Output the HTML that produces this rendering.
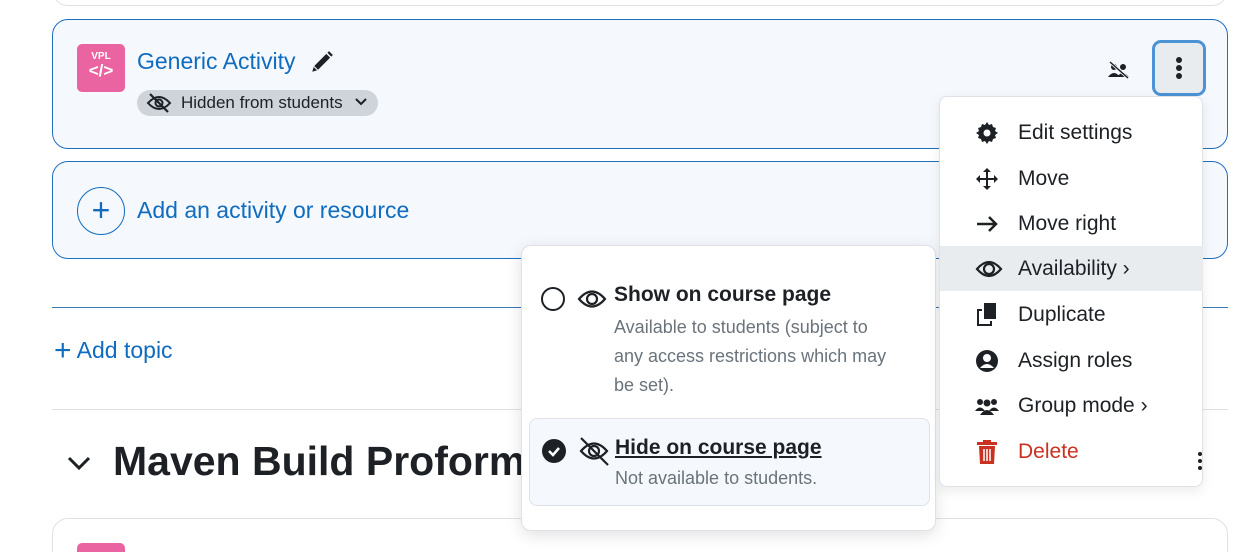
<!DOCTYPE html>
<html><head><meta charset="utf-8"><style>
*{box-sizing:border-box;margin:0;padding:0}
html,body{width:1256px;height:552px;overflow:hidden}
body{background:#fff;font-family:"Liberation Sans",sans-serif;position:relative;color:#1d2125}
.abs{position:absolute}
.card{position:absolute;left:52px;width:1176px;background:#f5f8fc;border:1px solid #1f6fc0;border-radius:16px}
.blue{color:#0f6cbf}
.mi{position:absolute;left:0;width:263px;height:45px;display:flex;align-items:center;font-size:21px}
.mi svg{position:absolute;left:35px}
.mi span{position:absolute;left:78px}
</style></head><body>
<div class="card" style="top:-40px;height:46px;border-color:#dee2e6;background:#fff"></div>
<div class="card" style="top:19px;height:130px"></div>
<div class="abs" style="left:77px;top:44px;width:48px;height:48px;background:#e964a0;border-radius:5px;color:#fff;text-align:center;font-weight:bold">
<div style="font-size:10px;margin-top:7px">VPL</div><div style="font-size:17px;line-height:18px">&lt;/&gt;</div></div>
<div class="abs blue" style="left:137px;top:48px;font-size:23px">Generic Activity</div>
<svg class="abs" style="left:309px;top:49px" width="26" height="26" viewBox="0 0 24 24"><path d="M3 21l1.5-5L16 4.5l3.5 3.5L8 19.5z M17 3.5l1.5-1.5 3.5 3.5-1.5 1.5z" fill="#1d2125"/><path d="M4.5 16l3.5 3.5" stroke="#fff" stroke-width="1"/></svg>
<div class="abs" style="left:137px;top:90px;width:241px;height:26px;background:#ced4da;border-radius:13px;font-size:17px;line-height:26px;padding-left:44px;color:#1d2125">Hidden from students</div>
<svg class="abs" style="left:354px;top:97px" width="14" height="10" viewBox="0 0 14 10"><path d="M2 2l5 5 5-5" fill="none" stroke="#1d2125" stroke-width="2"/></svg>
<svg class="abs" style="left:146px;top:93px" width="26" height="20" viewBox="0 0 26 20"><path d="M2 10Q13-2 24 10Q13 22 2 10z" fill="none" stroke="#1d2125" stroke-width="2"/><circle cx="13" cy="10" r="3.5" fill="none" stroke="#1d2125" stroke-width="2"/><path d="M4 1l18 18" stroke="#1d2125" stroke-width="2.2"/></svg>
<svg class="abs" style="left:1108px;top:59px" width="22" height="22" viewBox="0 0 22 22"><circle cx="6" cy="8" r="3" fill="#1d2125"/><circle cx="15" cy="8" r="3" fill="#1d2125"/><path d="M0 18q6-8 12 0zM9 18q6-8 12 0z" fill="#1d2125"/><path d="M2 3l18 16" stroke="#f5f8fc" stroke-width="3"/><path d="M2 3l18 16" stroke="#1d2125" stroke-width="1.5"/></svg>
<div class="abs" style="left:1152px;top:40px;width:54px;height:56px;border:3px solid #4b93d5;border-radius:9px;background:#e9ecef"></div>
<div class="abs" style="left:1176px;top:57px;width:6px;height:6px;border-radius:3px;background:#1d2125;box-shadow:0 8px 0 #1d2125,0 16px 0 #1d2125"></div>

<div class="card" style="top:161px;height:98px"></div>
<div class="abs" style="left:77px;top:187px;width:48px;height:48px;border:1.5px solid #0f6cbf;border-radius:50%;color:#0f6cbf;font-size:32px;line-height:44px;text-align:center">+</div>
<div class="abs blue" style="left:137px;top:197px;font-size:23px">Add an activity or resource</div>
<div class="abs" style="left:52px;top:307px;width:1176px;height:1px;background:#3a78b5"></div>
<div class="abs blue" style="left:54px;top:332px;font-size:23px"><span style="font-size:30px;position:relative;top:2px">+</span> Add topic</div>
<div class="abs" style="left:52px;top:409px;width:1176px;height:1px;background:#dee2e6"></div>
<svg class="abs" style="left:67px;top:455px" width="24" height="16" viewBox="0 0 24 16"><path d="M2 3l10 10L22 3" fill="none" stroke="#1d2125" stroke-width="3"/></svg>
<div class="abs" style="left:113px;top:438px;font-size:41px;font-weight:bold;white-space:nowrap">Maven Build Proforma</div>
<div class="abs" style="left:52px;top:518px;width:1176px;height:60px;border:1px solid #dee2e6;border-radius:16px;background:#fff"></div>
<div class="abs" style="left:77px;top:543px;width:48px;height:30px;background:#e964a0;border-radius:5px"></div>

<div class="abs" style="left:521px;top:245px;width:415px;height:286px;background:#fff;border:1px solid #dee2e6;border-radius:10px;box-shadow:0 4px 16px rgba(0,0,0,.12)">
<div class="abs" style="left:19px;top:41px;width:24px;height:24px;border:2px solid #1d2125;border-radius:50%"></div>
<svg class="abs" style="left:55px;top:41px" width="30" height="24" viewBox="0 0 30 24"><path d="M2 12Q15-3 28 12Q15 27 2 12z" fill="none" stroke="#1d2125" stroke-width="2.2"/><circle cx="15" cy="12" r="5" fill="none" stroke="#1d2125" stroke-width="2.2"/></svg>
<div class="abs" style="left:92px;top:37px;font-size:21px;font-weight:bold">Show on course page</div>
<div class="abs" style="left:92px;top:67px;font-size:18px;line-height:29px;color:#6a737b;width:284px">Available to students (subject to any access restrictions which may be set).</div>
<div class="abs" style="left:7px;top:172px;width:401px;height:88px;background:#f5f8fc;border:1px solid #dee2e6;border-radius:8px"></div>
<div class="abs" style="left:20px;top:193px;width:24px;height:24px;border-radius:50%;background:#1d2125"></div>
<svg class="abs" style="left:20px;top:193px" width="24" height="24"><path d="M7 12l4 4 6-7" fill="none" stroke="#fff" stroke-width="2.5"/></svg>
<svg class="abs" style="left:56px;top:190px" width="32" height="30" viewBox="0 0 32 30"><path d="M3 15Q16 0 29 15Q16 30 3 15z" fill="none" stroke="#1d2125" stroke-width="2.2"/><circle cx="16" cy="15" r="5" fill="none" stroke="#1d2125" stroke-width="2.2"/><path d="M3 2l27 27" stroke="#1d2125" stroke-width="2.2"/></svg>
<div class="abs" style="left:93px;top:190px;font-size:21px;font-weight:bold;text-decoration:underline">Hide on course page</div>
<div class="abs" style="left:93px;top:222px;font-size:18px;color:#6a737b">Not available to students.</div>
</div>

<div class="abs" style="left:939px;top:96px;width:264px;height:391px;background:#fff;border:1px solid #dee2e6;border-radius:8px;box-shadow:0 4px 12px rgba(0,0,0,.08)">
<div class="mi" style="top:13px"><svg width="24" height="24" viewBox="0 0 24 24"><path d="M12 1l2 3 3-1 1 3 3 1-1 3 3 2-3 2 1 3-3 1-1 3-3-1-2 3-2-3-3 1-1-3-3-1 1-3-3-2 3-2-1-3 3-1 1-3 3 1z" fill="#1d2125"/><circle cx="12" cy="12" r="3.5" fill="#fff"/></svg><span>Edit settings</span></div>
<div class="mi" style="top:59px"><svg width="24" height="24" viewBox="0 0 24 24"><path d="M12 1l4 4h-3v6h6V8l4 4-4 4v-3h-6v6h3l-4 4-4-4h3v-6H5v3l-4-4 4-4v3h6V5H8z" fill="#1d2125"/></svg><span>Move</span></div>
<div class="mi" style="top:104px"><svg width="24" height="24" viewBox="0 0 24 24"><path d="M2 12h19M14 5l7 7-7 7" fill="none" stroke="#1d2125" stroke-width="2.5"/></svg><span>Move right</span></div>
<div class="mi" style="top:149px;background:#e9ecef"><svg width="28" height="24" viewBox="0 0 28 24"><path d="M2 12Q14-2 26 12Q14 26 2 12z" fill="none" stroke="#1d2125" stroke-width="2.2"/><circle cx="14" cy="12" r="5" fill="none" stroke="#1d2125" stroke-width="2.2"/></svg><span>Availability &#8250;</span></div>
<div class="mi" style="top:195px"><svg width="24" height="26" viewBox="0 0 24 26"><path d="M9 1h12v16H9z" fill="#1d2125"/><path d="M2 7h5v2H4v13h11v-3h2v5H2z" fill="#1d2125"/></svg><span>Duplicate</span></div>
<div class="mi" style="top:241px"><svg width="24" height="24" viewBox="0 0 24 24"><circle cx="12" cy="12" r="11" fill="#1d2125"/><circle cx="12" cy="9" r="4" fill="#fff"/><path d="M5 19q7-8 14 0" fill="#fff"/></svg><span>Assign roles</span></div>
<div class="mi" style="top:286px"><svg width="24" height="20" viewBox="0 0 24 20"><circle cx="5" cy="6" r="3" fill="#1d2125"/><circle cx="19" cy="6" r="3" fill="#1d2125"/><circle cx="12" cy="7" r="3.5" fill="#1d2125"/><path d="M0 15q5-7 10 0zM14 15q5-7 10 0zM5 19q7-10 14 0z" fill="#1d2125"/></svg><span>Group mode &#8250;</span></div>
<div class="mi" style="top:332px;color:#ca3120"><svg width="24" height="26" viewBox="0 0 24 26"><path d="M2 3h20v3H2zM8 1h8v2H8zM4 7h16l-1 18H5z" fill="#ca3120"/><path d="M9 10v12M12 10v12M15 10v12" stroke="#fff" stroke-width="1.5"/></svg><span>Delete</span></div>
</div>
<div class="abs" style="left:1198px;top:452px;width:4px;height:4px;background:#1d2125;border-radius:2px;box-shadow:0 7px 0 #1d2125,0 14px 0 #1d2125"></div>
</body></html>
